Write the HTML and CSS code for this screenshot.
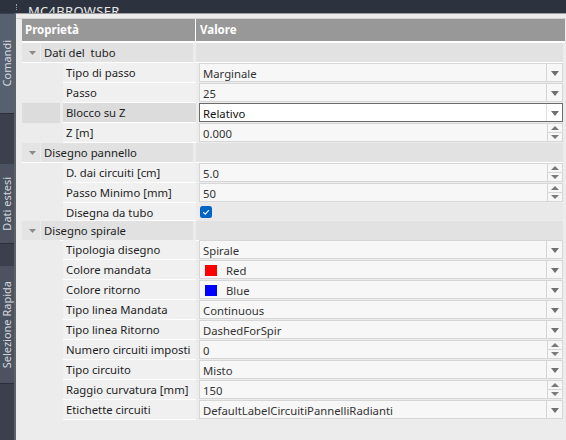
FILE: index.html
```
<!DOCTYPE html>
<html>
<head>
<meta charset="utf-8">
<link rel="stylesheet" href="styles.css">
</head>
<body>
<div class="titlebar"><span class="grip"></span><span class="title">MC4BROWSER</span></div>
<div class="main">
  <div class="sidebar">
    <div class="tab tab-active tab-1"><span>Comandi</span></div>
    <div class="tab tab-2"><span>Dati estesi</span></div>
    <div class="tab tab-3"><span>Selezione Rapida</span></div>
  </div>
  <div class="panel">
    <div class="topline"></div>
    <div class="header"><div class="h-prop">Proprietà</div><div class="h-val">Valore</div></div>

    <div class="row cat"><div class="arrow"><svg width="7" height="4" viewBox="0 0 7 4"><polygon points="0,0 7,0 3.5,4" fill="#8a8a8a"/></svg></div><div class="cat-label">Dati del&nbsp; tubo</div><div class="cat-val"></div></div>
    <div class="row"><div class="indent"></div><div class="label">Tipo di passo</div><div class="val"><span class="txt">Marginale</span><span class="dd"><svg width="8" height="5" viewBox="0 0 8 5"><polygon points="0,0 8,0 4,5" fill="#6f6f6f"/></svg></span></div></div>
    <div class="row"><div class="indent"></div><div class="label">Passo</div><div class="val"><span class="txt">25</span><span class="dd"><svg width="8" height="5" viewBox="0 0 8 5"><polygon points="0,0 8,0 4,5" fill="#6f6f6f"/></svg></span></div></div>
    <div class="row sel"><div class="indent"></div><div class="label">Blocco su Z</div><div class="val"><span class="txt">Relativo</span><span class="dd"><svg width="8" height="5" viewBox="0 0 8 5"><polygon points="0,0 8,0 4,5" fill="#6f6f6f"/></svg></span></div></div>
    <div class="row"><div class="indent"></div><div class="label">Z [m]</div><div class="val"><span class="txt">0.000</span><span class="spin"><span class="up"><svg width="8" height="4" viewBox="0 0 8 4"><polygon points="0,4 8,4 4,0" fill="#7a7a7a"/></svg></span><span class="down"><svg width="8" height="4" viewBox="0 0 8 4"><polygon points="0,0 8,0 4,4" fill="#7a7a7a"/></svg></span></span></div></div>

    <div class="row cat"><div class="arrow"><svg width="7" height="4" viewBox="0 0 7 4"><polygon points="0,0 7,0 3.5,4" fill="#8a8a8a"/></svg></div><div class="cat-label">Disegno pannello</div><div class="cat-val"></div></div>
    <div class="row"><div class="indent"></div><div class="label">D. dai circuiti [cm]</div><div class="val"><span class="txt">5.0</span><span class="spin"><span class="up"><svg width="8" height="4" viewBox="0 0 8 4"><polygon points="0,4 8,4 4,0" fill="#7a7a7a"/></svg></span><span class="down"><svg width="8" height="4" viewBox="0 0 8 4"><polygon points="0,0 8,0 4,4" fill="#7a7a7a"/></svg></span></span></div></div>
    <div class="row"><div class="indent"></div><div class="label">Passo Minimo [mm]</div><div class="val"><span class="txt">50</span><span class="spin"><span class="up"><svg width="8" height="4" viewBox="0 0 8 4"><polygon points="0,4 8,4 4,0" fill="#7a7a7a"/></svg></span><span class="down"><svg width="8" height="4" viewBox="0 0 8 4"><polygon points="0,0 8,0 4,4" fill="#7a7a7a"/></svg></span></span></div></div>
    <div class="row row-check"><div class="indent"></div><div class="label">Disegna da tubo</div><div class="val-plain"><span class="check"><svg width="12" height="12" viewBox="0 0 12 12"><rect x="0" y="0" width="12" height="12" rx="2.5" fill="#0063c6"/><path d="M3.2 6.2 L5.2 8.1 L8.9 4.2" fill="none" stroke="#fff" stroke-width="1.1"/></svg></span></div></div>

    <div class="row cat cat-short"><div class="arrow"><svg width="7" height="4" viewBox="0 0 7 4"><polygon points="0,0 7,0 3.5,4" fill="#8a8a8a"/></svg></div><div class="cat-label">Disegno spirale</div><div class="cat-val"></div></div>
    <div class="row"><div class="indent"></div><div class="label">Tipologia disegno</div><div class="val"><span class="txt">Spirale</span><span class="dd"><svg width="8" height="5" viewBox="0 0 8 5"><polygon points="0,0 8,0 4,5" fill="#6f6f6f"/></svg></span></div></div>
    <div class="row"><div class="indent"></div><div class="label">Colore mandata</div><div class="val"><span class="txt"><span class="swatch red"></span>Red</span><span class="dd"><svg width="8" height="5" viewBox="0 0 8 5"><polygon points="0,0 8,0 4,5" fill="#6f6f6f"/></svg></span></div></div>
    <div class="row"><div class="indent"></div><div class="label">Colore ritorno</div><div class="val"><span class="txt"><span class="swatch blue"></span>Blue</span><span class="dd"><svg width="8" height="5" viewBox="0 0 8 5"><polygon points="0,0 8,0 4,5" fill="#6f6f6f"/></svg></span></div></div>
    <div class="row"><div class="indent"></div><div class="label">Tipo linea Mandata</div><div class="val"><span class="txt">Continuous</span><span class="dd"><svg width="8" height="5" viewBox="0 0 8 5"><polygon points="0,0 8,0 4,5" fill="#6f6f6f"/></svg></span></div></div>
    <div class="row"><div class="indent"></div><div class="label">Tipo linea Ritorno</div><div class="val"><span class="txt">DashedForSpir</span><span class="dd"><svg width="8" height="5" viewBox="0 0 8 5"><polygon points="0,0 8,0 4,5" fill="#6f6f6f"/></svg></span></div></div>
    <div class="row"><div class="indent"></div><div class="label">Numero circuiti imposti</div><div class="val"><span class="txt">0</span><span class="spin"><span class="up"><svg width="8" height="4" viewBox="0 0 8 4"><polygon points="0,4 8,4 4,0" fill="#7a7a7a"/></svg></span><span class="down"><svg width="8" height="4" viewBox="0 0 8 4"><polygon points="0,0 8,0 4,4" fill="#7a7a7a"/></svg></span></span></div></div>
    <div class="row"><div class="indent"></div><div class="label">Tipo circuito</div><div class="val"><span class="txt">Misto</span><span class="dd"><svg width="8" height="5" viewBox="0 0 8 5"><polygon points="0,0 8,0 4,5" fill="#6f6f6f"/></svg></span></div></div>
    <div class="row"><div class="indent"></div><div class="label">Raggio curvatura [mm]</div><div class="val"><span class="txt">150</span><span class="spin"><span class="up"><svg width="8" height="4" viewBox="0 0 8 4"><polygon points="0,4 8,4 4,0" fill="#7a7a7a"/></svg></span><span class="down"><svg width="8" height="4" viewBox="0 0 8 4"><polygon points="0,0 8,0 4,4" fill="#7a7a7a"/></svg></span></span></div></div>
    <div class="row"><div class="indent"></div><div class="label">Etichette circuiti</div><div class="val"><span class="txt">DefaultLabelCircuitiPannelliRadianti</span><span class="dd"><svg width="8" height="5" viewBox="0 0 8 5"><polygon points="0,0 8,0 4,5" fill="#6f6f6f"/></svg></span></div></div>
  </div>
</div>
</body>
</html>
```
FILE: styles.css
```
* { box-sizing: border-box; }
html, body {
  margin: 0;
  padding: 0;
  width: 566px;
  height: 440px;
  overflow: hidden;
  background: #ececec;
  font-family: "Noto Sans", "Open Sans", sans-serif;
  font-size: 11.3px;
  color: #1e1e1e;
}
.titlebar {
  height: 13px;
  background: #2d333e;
  display: flex;
  align-items: flex-end;
  overflow: hidden;
}
.grip {
  width: 2px;
  height: 6px;
  margin-left: 16px;
  margin-bottom: 3px;
  border-left: 1px dotted #9aa0aa;
}
.title {
  color: #e8e8e8;
  font-size: 13px;
  line-height: 13px;
  margin-left: 10px;
  margin-bottom: -5px;
  letter-spacing: 0.3px;
}
.main {
  display: flex;
  height: 427px;
}
.sidebar {
  background: #3a414d;
  border-right: 2px solid #5d6168;
  width: 16px;
  display: flex;
  flex-direction: column;
  padding-top: 1px;
}
.tab {
  width: 14px;
  display: flex;
  align-items: center;
  justify-content: center;
  background: #4b5361;
  border-bottom: 1px solid #2a303a;
}
.tab span {
  writing-mode: vertical-rl;
  transform: rotate(180deg);
  font-size: 11px;
  color: #d6d8dc;
  white-space: nowrap;
  line-height: 14px;
}
.tab-1 { height: 100px; background: #576070; }
.tab-2 { height: 80px; margin-top: 50px; }
.tab-3 { height: 118px; margin-top: 22px; }
.panel {
  flex: 1;
  background: #ececec;
  padding: 0 3px 0 6px;
  border-top: 1px solid #9c9c9c;
}
.topline {
  height: 5px;
  border-bottom: 1px solid #d2d2d2;
  margin: 0 -3px 0 -6px;
}
.header {
  display: grid;
  grid-template-columns: 173px 1fr;
  height: 24px;
  background: #fff;
  border-bottom: 2px solid #fff;
  margin-right: -2px;
  column-gap: 1px;
  color: #fff;
  font-weight: bold;
  font-size: 11.5px;
}
.h-prop, .h-val {
  background: #989898;
  line-height: 22px;
}
.h-prop { padding-left: 3px; }
.h-val { padding-left: 4px; }
.row {
  display: grid;
  grid-template-columns: 38px 133px 1fr;
  column-gap: 3px;
  height: 20px;
}
.row.cat {
  grid-template-columns: 18px 153px 1fr;
  column-gap: 0;
}
.row.cat-short { height: 19px; }
.row-check { height: 18px; }
.arrow {
  background: #e4e4e4;
  border-bottom: 1px solid #fff;
  display: flex;
  align-items: center;
  justify-content: center;
  padding-left: 2px;
}
.cat-label {
  background: #e1e1e1;
  border-bottom: 1px solid #fff;
  border-left: 1px solid #ececec;
  padding-left: 3px;
  line-height: 19px;
}
.cat-val {
  background: #e2e2e2;
  border-bottom: 1px solid #fff;
  border-left: 3px solid #ececec;
}
.indent { background: #ececec; }
.label {
  background: #f0f0f0;
  border-bottom: 1px solid #fff;
  padding-left: 3px;
  line-height: 20px;
  white-space: nowrap;
  overflow: hidden;
}
.val {
  background: #f7f7f7;
  border: 1px solid #d6d6d6;
  height: 19px;
  display: flex;
  color: #333;
}
.val .txt {
  flex: 1;
  padding-left: 3px;
  line-height: 17px;
  padding-top: 1px;
  white-space: nowrap;
  overflow: hidden;
  display: flex;
  align-items: center;
}
.dd {
  width: 16px;
  border-left: 1px solid #d6d6d6;
  display: flex;
  align-items: center;
  justify-content: center;
  padding-top: 1px;
}
.spin {
  width: 16px;
  display: flex;
  flex-direction: column;
  margin: -1px -1px -1px 0;
}
.spin .up, .spin .down {
  flex: 1;
  border: 1px solid #d6d6d6;
  display: flex;
  align-items: center;
  justify-content: center;
  background: #f7f7f7;
}
.spin .down { border-top: none; }
.sel .indent { background: #dcdcdc; }
.sel .label { background: #dcdcdc; }
.sel .val {
  background: #fff;
  border-color: #6a6a6a;
  color: #111;
}
.sel .val .dd { border-left-color: #e0e0e0; }
.val-plain {
  display: flex;
  align-items: center;
  padding-left: 1px;
  background: #e9e9e9;
  border-bottom: 1px solid #ececec;
}
.check { display: flex; }
.swatch {
  width: 12px;
  height: 11px;
  margin: 0 9px 0 2px;
  display: inline-block;
}
.red { background: #ff0000; }
.blue { background: #0000ff; }
```
